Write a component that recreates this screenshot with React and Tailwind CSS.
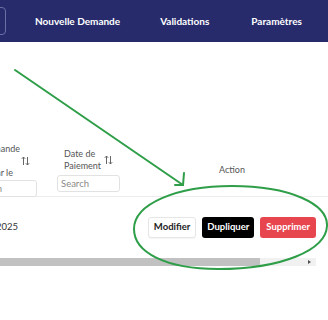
import React from "react";

const SortIcon = () => (
  <svg width="9" height="10" viewBox="0 0 9 10" className="shrink-0">
    <path d="M2.5 9V1M0.8 2.8L2.5 1L4.2 2.8" fill="none" stroke="#666" strokeWidth="1" />
    <path d="M6.5 1V9M4.8 7.2L6.5 9L8.2 7.2" fill="none" stroke="#666" strokeWidth="1" />
  </svg>
);

const SearchBox = ({ className }) => (
  <input
    placeholder="Search"
    className={`h-[17px] rounded-[3px] border border-[#e2e2e2] bg-white px-[3px] text-[9.5px] text-[#555] placeholder:text-[#8a8a8a] outline-none ${className}`}
  />
);

const Annotation = () => (
  <svg
    className="pointer-events-none absolute left-0 top-0"
    width="328"
    height="320"
    viewBox="0 0 328 320"
  >
    <g fill="none" stroke="#2e9e48" strokeWidth="2" strokeLinecap="round">
      <path d="M15 70 L183 185" />
      <path d="M184 173 L183 185 L175 185" />
      <path d="M232 186 C290 186 328 204 327 226 C326 250 282 269 218 269 C165 269 134 252 134 229 C134 204 176 186 232 186 Z" />
    </g>
  </svg>
);

export default function App() {
  return (
    <div className="relative h-[320px] w-[328px] overflow-hidden bg-white font-['Lato',sans-serif]">
      <nav className="flex h-[42px] items-center bg-[#272b6c]">
        <div className="-ml-[34px] h-[28px] w-[40px] shrink-0 rounded-[4px] border border-[#6a6fa6]" />
        <a className="ml-[29px] text-[10px] font-bold text-white">Nouvelle Demande</a>
        <a className="ml-[40px] text-[10px] font-bold text-white">Validations</a>
        <a className="ml-[42px] text-[10px] font-bold text-white">Paramètres</a>
      </nav>

      <div className="mt-[98px]">
        <div className="flex h-[57px] items-center border-b border-[#ececec] pt-[4px] text-[9px] leading-[12px] text-[#555]">
          <div className="flex w-[38px] shrink-0 flex-col">
            <div className="flex items-center">
              <div className="flex w-[20px] flex-col">
                <div className="flex justify-end whitespace-nowrap">
                  <span>Date de Demande</span>
                </div>
                <div>&nbsp;</div>
                <div className="flex justify-end whitespace-nowrap pr-[7px]">
                  <span>Créée par le</span>
                </div>
              </div>
              <div className="ml-[1px]">
                <SortIcon />
              </div>
            </div>
            <SearchBox className="-ml-[30px] mt-[1px] w-[67px]" />
          </div>

          <div className="ml-[19px] flex w-[63px] shrink-0 flex-col items-center">
            <div className="flex items-center gap-[3px]">
              <div>
                <div>Date de</div>
                <div>Paiement</div>
              </div>
              <SortIcon />
            </div>
            <SearchBox className="mt-[3px] w-[63px]" />
          </div>

          <div className="ml-[20px] flex w-[184px] shrink-0 justify-center">
            Action
          </div>
        </div>

        <div className="flex h-[61px] items-center text-[9.5px] text-[#333]">
          <div className="flex w-[18px] shrink-0 justify-end whitespace-nowrap">
            <span>12/03/2025</span>
          </div>
          <div className="ml-[122px] flex w-[184px] shrink-0 justify-center gap-[6px]">
            <button className="h-[21px] rounded-[3px] border border-[#e6e6e6] bg-white px-[5px] text-[9.5px] font-bold text-[#222] shadow-[0_1px_1px_rgba(0,0,0,0.04)]">
              Modifier
            </button>
            <button className="h-[21px] rounded-[3px] bg-black px-[5px] text-[9.5px] font-bold text-white">
              Dupliquer
            </button>
            <button className="h-[21px] rounded-[3px] bg-[#e8464f] px-[6px] text-[9.5px] font-bold text-white">
              Supprimer
            </button>
          </div>
        </div>

        <div className="flex h-[8px] w-[316px] items-center bg-[#f1f1f1]">
          <div className="h-full w-[260px] bg-[#c1c1c1]" />
          <div className="ml-auto mr-[5px] h-0 w-0 border-y-[2.5px] border-l-[3px] border-y-transparent border-l-[#505050]" />
        </div>
      </div>

      <Annotation />
    </div>
  );
}
